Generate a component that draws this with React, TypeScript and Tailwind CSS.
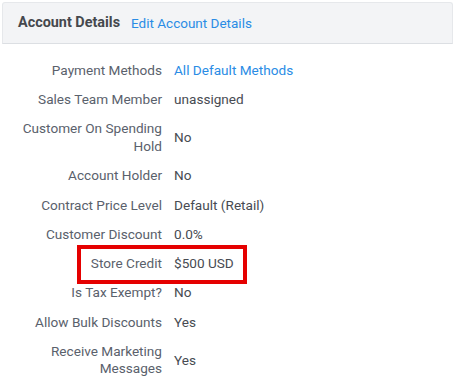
import React from "react";

const rows: { label: string; value: string; link?: boolean; highlight?: boolean }[] = [
  { label: "Payment Methods", value: "All Default Methods", link: true },
  { label: "Sales Team Member", value: "unassigned" },
  { label: "Customer On Spending Hold", value: "No" },
  { label: "Account Holder", value: "No" },
  { label: "Contract Price Level", value: "Default (Retail)" },
  { label: "Customer Discount", value: "0.0%" },
  { label: "Store Credit", value: "$500 USD", highlight: true },
  { label: "Is Tax Exempt?", value: "No" },
  { label: "Allow Bulk Discounts", value: "Yes" },
  { label: "Receive Marketing Messages", value: "Yes" },
];

export default function App() {
  return (
    <div
      className="w-[455px] h-[390px] bg-white overflow-hidden"
      style={{ fontFamily: "Roboto, 'Liberation Sans', sans-serif" }}
    >
      <div className="mx-[2px] mt-[2px] h-[42px] bg-[#f3f4f6] border border-[#e6e8eb] border-b-[#dcdfe3] rounded-t-[3px] flex items-center pl-[15px] gap-[11px]">
        <span className="font-bold text-[14.4px] text-[#45484d]">Account Details</span>
        <span className="text-[13.5px] text-[#2a8ce5]">Edit Account Details</span>
      </div>
      <div className="pt-[12px]">
        {rows.map((r) => (
          <div key={r.label} className="flex items-center text-[13.6px] leading-[17.5px] py-[5.9px]">
            <div className="w-[150px] ml-[12px] text-right text-[#5a616c] shrink-0">{r.label}</div>
            <div className={`ml-[12px] ${r.link ? "text-[#2a8ce5]" : "text-[#474b52]"} ${r.highlight ? "relative" : ""}`}>
              {r.value}
              {r.highlight && (
                <div className="absolute left-[-97px] top-[-10px] bottom-[-11px] border-[4.5px] border-[#e50000] w-[170px]" />
              )}
            </div>
          </div>
        ))}
      </div>
    </div>
  );
}
